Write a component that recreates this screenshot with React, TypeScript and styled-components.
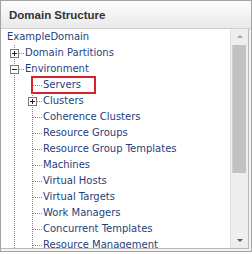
import React from "react"
import styled, { createGlobalStyle } from "styled-components"

const Global = createGlobalStyle`
  html, body {
    margin: 0;
    padding: 0;
    background: #ffffff;
  }
`

const Panel = styled.div`
  width: 250px;
  height: 250px;
  border: 1px solid #a3a3a3;
  display: flex;
  flex-direction: column;
  background: #f3f3f3;
`

const Header = styled.div`
  height: 27px;
  border-bottom: 1px solid #cfcfcf;
  background: linear-gradient(#fdfdfd, #e9e9e9);
  display: flex;
  align-items: center;
  padding-left: 8px;
  font-family: "Liberation Sans", Arial, sans-serif;
  font-weight: bold;
  font-size: 11.5px;
  color: #333333;
`

const Body = styled.div`
  flex: 1;
  display: flex;
  margin: 0 2px 2px 0;
  border-right: 1px solid #b9b9b9;
  border-bottom: 1px solid #b9b9b9;
  background: #ffffff;
  overflow: hidden;
`

const Tree = styled.ul`
  flex: 1;
  margin: 0;
  padding: 0 0 0 5px;
  list-style: none;
  overflow: hidden;
`

const Row = styled.li`
  position: relative;
  display: flex;
  align-items: center;
  height: 16px;
`

const Label = styled.span`
  padding-left: 1px;
  font-family: "DejaVu Sans", Verdana, sans-serif;
  font-size: 10px;
  line-height: 16px;
  color: #1f3f7c;
  white-space: nowrap;
`

const Highlight = styled.span`
  position: absolute;
  left: 25px;
  top: -1px;
  width: 61px;
  height: 14px;
  border: 2px solid #d9232b;
`

const ScrollBar = styled.div`
  width: 17px;
  display: flex;
  flex-direction: column;
  background: #eeeeee;
  border-left: 1px solid #e2e2e2;
`

const ArrowButton = styled.div<{ $down?: boolean }>`
  height: 15px;
  display: flex;
  align-items: center;
  justify-content: center;

  &::after {
    content: "";
    border-left: 3px solid transparent;
    border-right: 3px solid transparent;
    ${(p) =>
      p.$down
        ? "border-top: 3px solid #5a5a5a;"
        : "border-bottom: 3px solid #a0a0a0;"}
  }
`

const Track = styled.div`
  flex: 1;
  padding: 1px 2px 0 1px;
`

const Thumb = styled.div`
  height: 128px;
  background: #c1c1c1;
  border-left: 1px solid #d0d0d0;
`

type Cell = "line" | "tee" | "plus" | "minus"

const Connector = ({ kind }: { kind: Cell }) => (
  <svg width="18" height="16" style={{ flex: "none", display: "block" }}>
    <g stroke="#8a8a8a" strokeWidth="1" strokeDasharray="1 1" fill="none">
      <line x1="8.5" y1="0" x2="8.5" y2="16" />
      {kind === "tee" && <line x1="9" y1="8.5" x2="18" y2="8.5" />}
      {(kind === "plus" || kind === "minus") && (
        <line x1="13" y1="8.5" x2="18" y2="8.5" />
      )}
    </g>
    {(kind === "plus" || kind === "minus") && (
      <g stroke="#7a7a7a" strokeWidth="1" fill="#ffffff">
        <rect x="4.5" y="4.5" width="8" height="8" />
        <line x1="6" y1="8.5" x2="11" y2="8.5" stroke="#222" />
        {kind === "plus" && <line x1="8.5" y1="6" x2="8.5" y2="11" stroke="#222" />}
      </g>
    )}
  </svg>
)

type Node = { label: string; cells: Cell[]; selected?: boolean }

const child = (label: string, kind: Cell = "tee"): Node => ({
  label,
  cells: ["line", kind],
})

const nodes: Node[] = [
  { label: "ExampleDomain", cells: [] },
  { label: "Domain Partitions", cells: ["plus"] },
  { label: "Environment", cells: ["minus"] },
  { ...child("Servers"), selected: true },
  child("Clusters", "plus"),
  child("Coherence Clusters"),
  child("Resource Groups"),
  child("Resource Group Templates"),
  child("Machines"),
  child("Virtual Hosts"),
  child("Virtual Targets"),
  child("Work Managers"),
  child("Concurrent Templates"),
  child("Resource Management"),
]

const App = () => (
  <>
    <Global />
    <Panel>
      <Header>Domain Structure</Header>
      <Body>
        <Tree>
          {nodes.map((n) => (
            <Row key={n.label}>
              {n.cells.map((c, i) => (
                <Connector key={i} kind={c} />
              ))}
              <Label>{n.label}</Label>
              {n.selected && <Highlight />}
            </Row>
          ))}
        </Tree>
        <ScrollBar>
          <ArrowButton />
          <Track>
            <Thumb />
          </Track>
          <ArrowButton $down />
        </ScrollBar>
      </Body>
    </Panel>
  </>
)

export default App
